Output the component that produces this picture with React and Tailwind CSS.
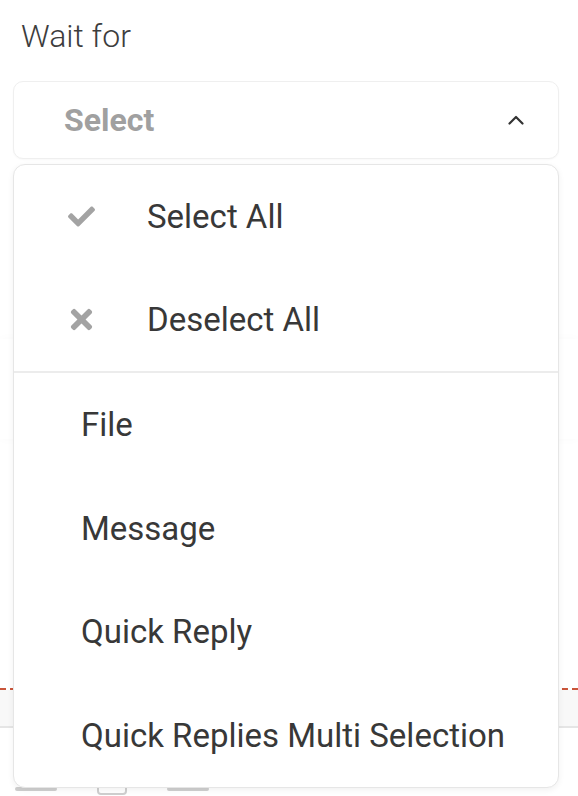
import { FaCheck, FaTimes } from "react-icons/fa";

const options = ["File", "Message", "Quick Reply", "Quick Replies Multi Selection"];

function Chevron() {
  return (
    <svg width="16" height="10" viewBox="0 0 16 10" fill="none">
      <path d="M1.5 8.5L8 2l6.5 6.5" stroke="#333" strokeWidth="2.2" strokeLinecap="round" strokeLinejoin="round" />
    </svg>
  );
}

export default function App() {
  return (
    <div className="relative min-h-[796px] overflow-hidden bg-white font-['Roboto',sans-serif]">
      <div className="pl-[13px] pr-[19px] pt-[17px]">
        <div className="pl-[8px] text-[32px] font-light leading-[38px] text-[#3d3d3d]">Wait for</div>
        <div className="relative mt-[26px]">
          <button
            type="button"
            className="flex h-[78px] w-full items-center justify-between rounded-[10px] border border-[#efefef] bg-white pl-[50px] pr-[34px] shadow-[0_1px_2px_rgba(0,0,0,0.03)]"
          >
            <span className="text-[32px] font-bold text-[#a0a0a0]">Select</span>
            <Chevron />
          </button>

          <div className="absolute left-0 right-0 top-[83px] z-10 overflow-hidden rounded-[12px] border border-[#e6e6e6] bg-white shadow-[0_2px_6px_rgba(0,0,0,0.06)]">
            <div className="flex h-[103px] items-center">
              <span className="flex w-[133px] justify-center pl-[1px] text-[#a3a3a3]">
                <FaCheck size={27} />
              </span>
              <span className="text-[33px] text-[#383838]">Select All</span>
            </div>
            <div className="flex h-[103px] items-center">
              <span className="flex w-[133px] justify-center pl-[1px] text-[#a3a3a3]">
                <FaTimes size={31} />
              </span>
              <span className="text-[33px] text-[#383838]">Deselect All</span>
            </div>
            <div className="border-t-2 border-[#ececec]" />
            {options.map((item) => (
              <div key={item} className="flex h-[103.5px] items-center pl-[67px] text-[33px] text-[#383838]">
                {item}
              </div>
            ))}
          </div>
        </div>
      </div>

      <div className="mt-[180px] h-[100px] shadow-[0_0_10px_rgba(0,0,0,0.025)]" />
      <div className="h-[249px]" />
      <div className="border-t-2 border-dashed border-[#c9553a]" />
      <div className="h-[38px] border-b-2 border-[#e5e5e5] bg-[#f8f8f8]" />
      <div className="mt-[55px] flex items-center gap-[40px] px-[15px]">
        <div className="h-[4px] w-[42px] rounded bg-[#cfcfcf]" />
        <div className="h-[12px] w-[30px] rounded border-2 border-[#cfcfcf]" />
        <div className="h-[4px] w-[42px] rounded bg-[#cfcfcf]" />
      </div>
    </div>
  );
}
